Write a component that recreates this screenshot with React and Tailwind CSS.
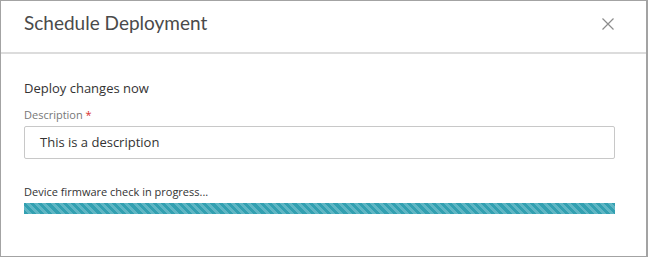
export default function App() {
  return (
    <div className="w-[648px] h-[257px] bg-white border border-r-2 border-[#a3a3a3] box-border flex flex-col" style={{ fontFamily: "'Open Sans', sans-serif" }}>
      {/* Header */}
      <div className="h-[53px] border-b-2 border-[#dcdcdc] flex items-center justify-between pl-[23px] pr-[32px] pb-[6px] shrink-0">
        <h2 className="text-[19px] text-[#4a4a4a] font-normal" style={{ fontFamily: "Lato, sans-serif" }}>
          Schedule Deployment
        </h2>
        <svg width="12" height="12" viewBox="0 0 12 12" className="text-[#8c8c8c]">
          <path d="M0.5 0.5 L11.5 11.5 M11.5 0.5 L0.5 11.5" stroke="currentColor" strokeWidth="1.2" fill="none" />
        </svg>
      </div>

      {/* Body */}
      <div className="px-[23px] pt-[24px] pr-[31px]">
        <p className="text-[13px] text-[#333] leading-[20px]">Deploy changes now</p>
        <label className="block mt-[9px] text-[11px] text-[#777] leading-[16px]">
          Description <span className="text-[#d9302c]">*</span>
        </label>
        <div className="mt-[3px] h-[33px] border border-[#c8c8c8] rounded-[2px] flex items-center px-[15px] text-[13px] text-[#333]">
          This is a description
        </div>
        <p className="mt-[25px] text-[11px] text-[#333] leading-[16px]">Device firmware check in progress...</p>
        <div className="mt-[3px] h-[11px] bg-[#33a0b1] bg-[repeating-linear-gradient(45deg,#33a0b1_0px,#33a0b1_3px,#5fb6c4_3px,#5fb6c4_5.8px)]" />
      </div>
    </div>
  );
}
